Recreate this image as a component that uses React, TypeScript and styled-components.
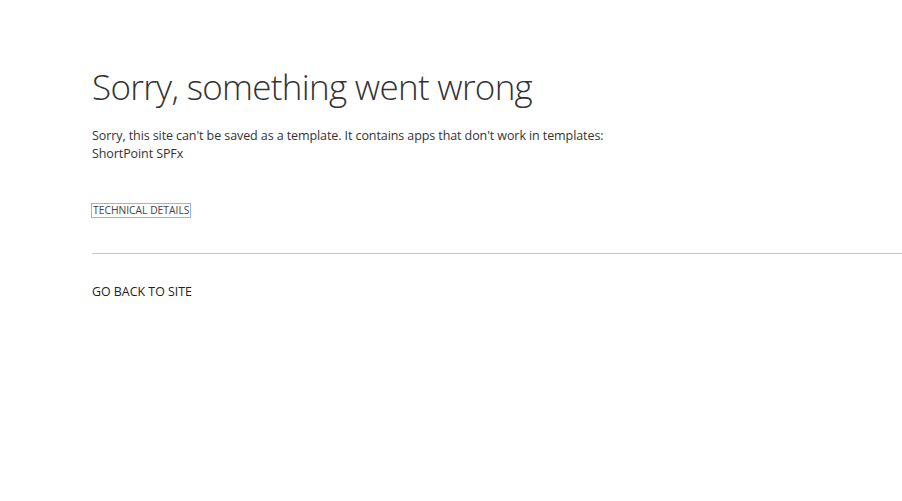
import React from "react";
import styled, { createGlobalStyle } from "styled-components";

const Global = createGlobalStyle`
  html, body { margin: 0; padding: 0; background: #fff; }
  body { font-family: "Open Sans", "Noto Sans", sans-serif; color: #333; }
`;

const Page = styled.div`
  width: 902px;
  height: 501px;
  padding: 63px 0 0 92px;
  box-sizing: border-box;
  overflow: hidden;
`;

const Title = styled.h1`
  margin: 0;
  font-family: "Open Sans", sans-serif;
  font-weight: 300;
  font-size: 35px;
  line-height: 48px;
  color: #333;
  letter-spacing: -0.7px;
`;

const Message = styled.p`
  margin: 16px 0 0;
  font-size: 12.5px;
  line-height: 18px;
  color: #333;
  letter-spacing: -0.09px;
`;

const DetailsLink = styled.a`
  display: inline-block;
  margin-top: 41px;
  font-size: 10.3px;
  line-height: 13px;
  color: #444;
  text-decoration: none;
  outline: 1px solid #8fb3f8;
  outline-offset: 0;
  padding: 0 1px;
`;

const Divider = styled.hr`
  margin: 34px 0 0;
  border: none;
  border-top: 1px solid #c8c8c8;
`;

const BackLink = styled.a`
  display: block;
  margin-top: 30px;
  font-size: 12.4px;
  line-height: 16px;
  color: #222;
  text-decoration: none;
`;

export default function App() {
  return (
    <>
      <Global />
      <Page>
        <Title>Sorry, something went wrong</Title>
        <Message>
          Sorry, this site can't be saved as a template. It contains apps that don't work in templates:
          <br />
          ShortPoint SPFx
        </Message>
        <DetailsLink href="#">TECHNICAL DETAILS</DetailsLink>
        <Divider />
        <BackLink href="#">GO BACK TO SITE</BackLink>
      </Page>
    </>
  );
}
